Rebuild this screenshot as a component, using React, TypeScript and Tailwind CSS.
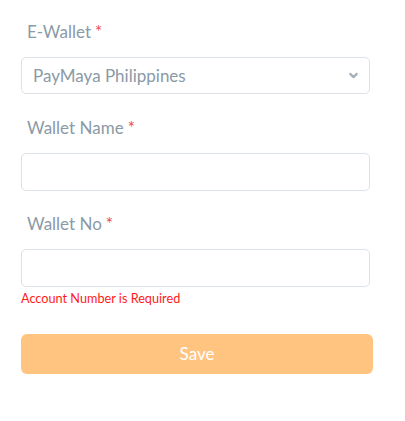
import { ChevronDown } from "lucide-react";

// ── Field label with required marker ─────────────────────────────────────
function Label({ text }: { text: string }) {
  return (
    <p className="pl-[6px] text-[17px] leading-[20px] text-[#8a9aa6]">
      {text}
      <span className="ml-[4px] text-[#f0475b]">*</span>
    </p>
  );
}

export default function App() {
  return (
    <div className="min-h-[421px] w-[405px] bg-white font-['Lato',sans-serif]">
      <div className="flex w-[352px] flex-col pl-[21px] pt-[22px]">
        {/* ── E-Wallet ─────────────────────────────────────────────── */}
        <Label text="E-Wallet" />
        <div className="mt-[15px] flex h-[37px] w-[349px] items-center justify-between rounded-[5px] border border-[#dde2e8] pl-[11px] pr-[9px]">
          <span className="text-[17px] text-[#8a9aa6]">PayMaya Philippines</span>
          <ChevronDown className="size-[13px] text-[#a3afb9]" strokeWidth={4} />
        </div>

        {/* ── Wallet Name ──────────────────────────────────────────── */}
        <div className="mt-[24px]">
          <Label text="Wallet Name" />
        </div>
        <input className="mt-[15px] h-[38px] w-[349px] rounded-[5px] border border-[#dde2e8] outline-none" />

        {/* ── Wallet No ────────────────────────────────────────────── */}
        <div className="mt-[23px]">
          <Label text="Wallet No" />
        </div>
        <input className="mt-[15px] h-[38px] w-[349px] rounded-[5px] border border-[#dde2e8] outline-none" />
        <p className="mt-[4px] text-[12.7px] leading-[15px] text-[#ff1a1a]">Account Number is Required</p>

        {/* ── Save ─────────────────────────────────────────────────── */}
        <button className="mt-[28px] h-[40px] w-[352px] rounded-[6px] bg-[#ffc580] text-[17px] text-white">
          Save
        </button>
      </div>
    </div>
  );
}
